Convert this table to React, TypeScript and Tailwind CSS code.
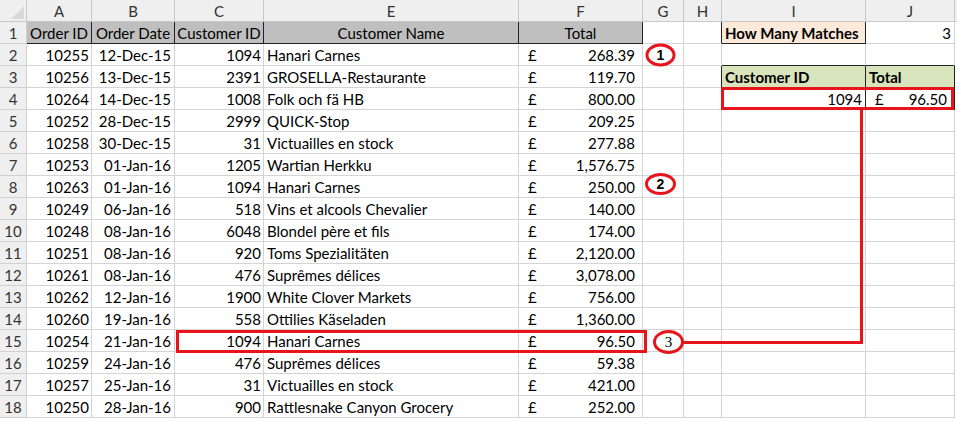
import type { ReactNode } from "react";

type Row = [string, string, string, string, string];

const ROWS: Row[] = [
  ["10255", "12-Dec-15", "1094", "Hanari Carnes", "268.39"],
  ["10256", "13-Dec-15", "2391", "GROSELLA-Restaurante", "119.70"],
  ["10264", "14-Dec-15", "1008", "Folk och fä HB", "800.00"],
  ["10252", "28-Dec-15", "2999", "QUICK-Stop", "209.25"],
  ["10258", "30-Dec-15", "31", "Victuailles en stock", "277.88"],
  ["10253", "01-Jan-16", "1205", "Wartian Herkku", "1,576.75"],
  ["10263", "01-Jan-16", "1094", "Hanari Carnes", "250.00"],
  ["10249", "06-Jan-16", "518", "Vins et alcools Chevalier", "140.00"],
  ["10248", "08-Jan-16", "6048", "Blondel père et fils", "174.00"],
  ["10251", "08-Jan-16", "920", "Toms Spezialitäten", "2,120.00"],
  ["10261", "08-Jan-16", "476", "Suprêmes délices", "3,078.00"],
  ["10262", "12-Jan-16", "1900", "White Clover Markets", "756.00"],
  ["10260", "19-Jan-16", "558", "Ottilies Käseladen", "1,360.00"],
  ["10254", "21-Jan-16", "1094", "Hanari Carnes", "96.50"],
  ["10259", "24-Jan-16", "476", "Suprêmes délices", "59.38"],
  ["10257", "25-Jan-16", "31", "Victuailles en stock", "421.00"],
  ["10250", "28-Jan-16", "900", "Rattlesnake Canyon Grocery", "252.00"],
];

const COLS = ["A", "B", "C", "E", "F", "G", "H", "I", "J"];

// plain cell with excel gridlines on right + bottom
const Cell = ({ children, className = "" }: { children?: ReactNode; className?: string }) => (
  <div
    className={`h-[22px] pt-[2px] flex items-center border-r border-b border-[#d4d4d4] overflow-hidden whitespace-nowrap ${className}`}
  >
    {children}
  </div>
);

const RowHead = ({ n }: { n: number }) => (
  <div className="h-[22px] pt-[2px] flex items-center justify-center bg-[#efefef] border-r border-b border-[#d0d0d0] text-[#333]">
    {n}
  </div>
);

const Money = ({ v }: { v: string }) => (
  <div className="flex w-full justify-between pl-[9px] pr-[7px]">
    <span>£</span>
    <span>{v}</span>
  </div>
);

const Overlay = () => (
  <svg className="absolute left-0 top-0 pointer-events-none" width={957} height={421}>
    <g fill="none" stroke="#e8141c">
      <rect x={177.5} y={331.5} width={468} height={20} strokeWidth={3} />
      <rect x={722.5} y={88.5} width={230} height={20} strokeWidth={3} />
      <polyline points="683,342.5 861.5,342.5 861.5,110" strokeWidth={3} />
      <ellipse cx={660.5} cy={55} rx={13.5} ry={10} strokeWidth={3} fill="#fff" />
      <ellipse cx={660.5} cy={184} rx={14} ry={9.5} strokeWidth={3} fill="#fff" />
      <ellipse cx={668.5} cy={342} rx={14} ry={10.5} strokeWidth={3} fill="#fff" />
    </g>
    <g fill="#000" fontSize={14} textAnchor="middle">
      <text x={660.5} y={60} fontFamily="'Liberation Sans', Arial, sans-serif" fontWeight={700}>1</text>
      <text x={660.5} y={189} fontFamily="'Liberation Sans', Arial, sans-serif" fontWeight={700}>2</text>
      <text x={668.5} y={347} fontFamily="'Liberation Serif', serif" fontSize={15}>3</text>
    </g>
  </svg>
);

export default function App() {
  return (
    <div className="relative w-[957px] h-[421px] bg-white overflow-hidden text-[15px] text-black font-['Lato',sans-serif]">
      <div className="grid grid-cols-[27px_65px_83px_89px_255px_124px_41px_38px_144px_89px_2px]">
        {/* column letters */}
        <div className="h-[22px] bg-[#efefef] border-r border-b border-[#c8c8c8] relative">
          <svg className="absolute left-[11px] top-[6px]" width={14} height={14}>
            <polygon points="13,0 13,13 0,13" fill="#d9d9d9" />
          </svg>
        </div>
        {COLS.map((c) => (
          <div
            key={c}
            className="h-[22px] pt-[1px] flex items-center justify-center bg-[#efefef] border-r border-b border-[#c8c8c8] text-[#333]"
          >
            {c}
          </div>
        ))}
        <div className="h-[22px] bg-[#efefef] border-b border-[#c8c8c8]" />

        {/* row 1 */}
        <RowHead n={1} />
        {["Order ID", "Order Date", "Customer ID", "Customer Name", "Total"].map((h) => (
          <Cell key={h} className="bg-[#bfbfbf] justify-center border-r-[#222] border-b-[#222]">
            {h}
          </Cell>
        ))}
        <Cell />
        <Cell className="border-r-[#222]" />
        <Cell className="bg-[#fde9d9] font-bold pl-[3px] border-r-[#222] border-b-[#222]">How Many Matches</Cell>
        <Cell className="justify-end pr-[3px]">3</Cell>
        <div />

        {ROWS.map((r, i) => {
          const n = i + 2;
          return [
            <RowHead key={`h${n}`} n={n} />,
            <Cell key={`a${n}`} className="justify-end pr-[2px]">{r[0]}</Cell>,
            <Cell key={`b${n}`} className="justify-end pr-[3px]">{r[1]}</Cell>,
            <Cell key={`c${n}`} className="justify-end pr-[2px]">{r[2]}</Cell>,
            <Cell key={`e${n}`} className="pl-[3px]">{r[3]}</Cell>,
            <Cell key={`f${n}`}>
              <Money v={r[4]} />
            </Cell>,
            <Cell key={`g${n}`} />,
            ...(n === 2
              ? [
                  <Cell key={`hh${n}`} />,
                  <Cell key={`i${n}`} className="border-b-[#222]" />,
                  <Cell key={`j${n}`} className="border-b-[#222]" />,
                ]
              : n === 3
                ? [
                    <Cell key={`hh${n}`} className="border-r-[#222]" />,
                    <Cell key={`i${n}`} className="bg-[#d8e4bc] font-bold pl-[3px] border-r-[#222] border-b-[#222]">
                      Customer ID
                    </Cell>,
                    <Cell key={`j${n}`} className="bg-[#d8e4bc] font-bold pl-[3px] border-r-[#222] border-b-[#222]">
                      Total
                    </Cell>,
                  ]
                : n === 4
                  ? [
                      <Cell key={`hh${n}`} className="border-r-[#222]" />,
                      <Cell key={`i${n}`} className="justify-end pr-[3px] border-r-[#222] border-b-[#222]">
                        1094
                      </Cell>,
                      <Cell key={`j${n}`} className="border-r-[#222] border-b-[#222]">
                        <Money v="96.50" />
                      </Cell>,
                    ]
                  : [
                      <Cell key={`hh${n}`} />,
                      <Cell key={`i${n}`} />,
                      <Cell key={`j${n}`} />,
                    ]),
            <div key={`x${n}`} />,
          ];
        })}
      </div>
      <Overlay />
    </div>
  );
}
